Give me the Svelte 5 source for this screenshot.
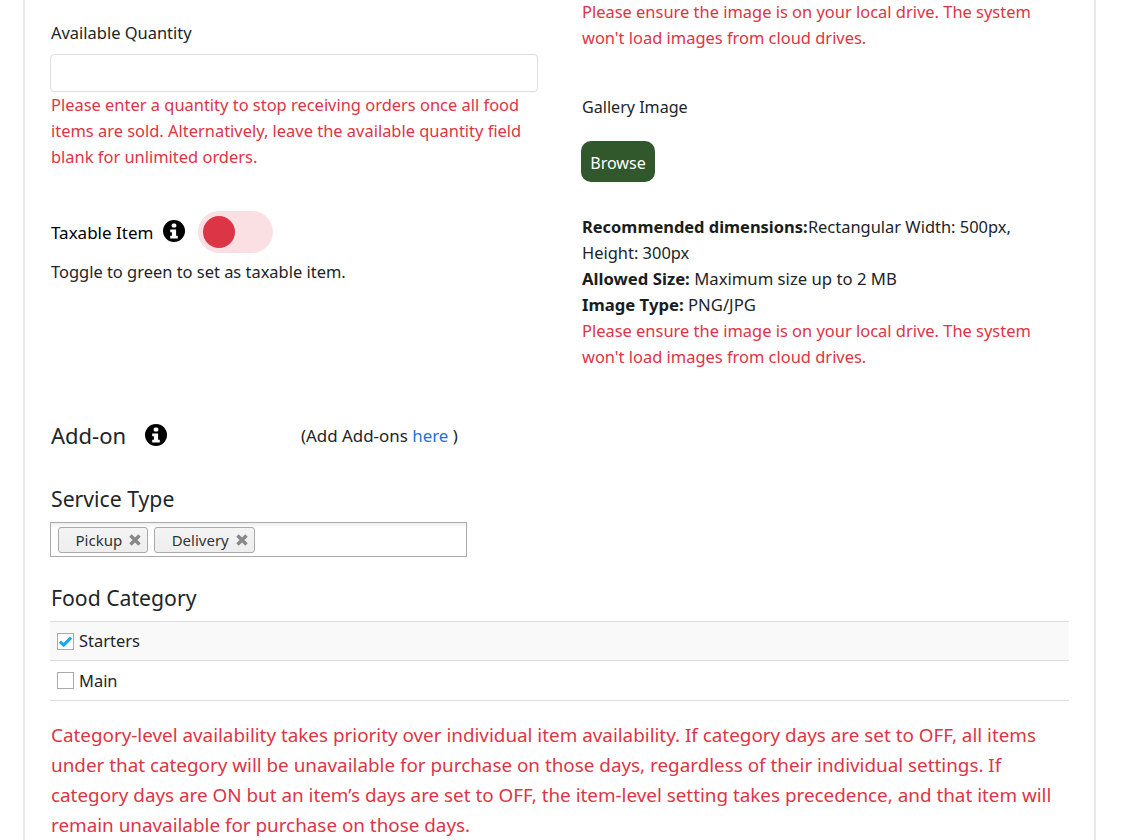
<script>
  const services = ['Pickup', 'Delivery'];
  const categories = [
    { name: 'Starters', checked: true },
    { name: 'Main', checked: false }
  ];
</script>

{#snippet info(cls)}
  <svg class={cls} viewBox="0 0 22 22" aria-hidden="true">
    <circle cx="11" cy="11" r="11" fill="#000" />
    <rect x="8.6" y="3.6" width="4.8" height="4" rx="1.6" fill="#fff" />
    <path d="M7.2 9.4h5.9v6.4h1.7v2.8H7.2v-2.8h1.7v-3.6H7.2z" fill="#fff" />
  </svg>
{/snippet}

<div class="page">
  <div class="card">
    <div class="columns">
      <div class="left">
        <label class="qty-label" for="qty">Available Quantity</label>
        <input id="qty" class="qty" type="text" />
        <p class="red help">Please enter a quantity to stop receiving orders once all food items are sold. Alternatively, leave the available quantity field blank for unlimited orders.</p>
        <div class="taxable">
          <span class="tax-label">Taxable Item</span>
          {@render info('i-tax')}
          <span class="toggle"><span class="knob"></span></span>
        </div>
        <p class="tax-help">Toggle to green to set as taxable item.</p>
      </div>
      <div class="right">
        <p class="red">Please ensure the image is on your local drive. The system won't load images from cloud drives.</p>
        <p class="gallery">Gallery Image</p>
        <button class="browse" type="button">Browse</button>
        <div class="specs">
          <div><b>Recommended dimensions:</b> <span class="rec">Rectangular Width: 500px, Height: 300px</span></div>
          <div class="wide"><b>Allowed Size:</b> Maximum size up to 2 MB</div>
          <div class="wide"><b>Image Type:</b> PNG/JPG</div>
          <div class="red">Please ensure the image is on your local drive. The system won't load images from cloud drives.</div>
        </div>
      </div>
    </div>

    <div class="addon">
      <span class="addon-title">Add-on</span>
      {@render info('i-add')}
      <span class="addon-link">(Add Add-ons <a href="#here">here</a> )</span>
    </div>

    <h3 class="service-title">Service Type</h3>
    <div class="tags">
      {#each services as s}
        <span class="tag">{s}<svg class="x" viewBox="0 0 12 12" aria-hidden="true"><path d="M1.5 1.5l9 9M10.5 1.5l-9 9" stroke="#888" stroke-width="3.4" /></svg></span>
      {/each}
    </div>

    <h3 class="food-title">Food Category</h3>
    <div class="cats">
      {#each categories as c}
        <div class="cat" class:on={c.checked}>
          <span class="box">
            {#if c.checked}
              <svg viewBox="0 0 16 16" aria-hidden="true"><path d="M2 8.2l4 3.6 8-8" fill="none" stroke="#1ba8e6" stroke-width="3.4" /></svg>
            {/if}
          </span>
          <span>{c.name}</span>
        </div>
      {/each}
    </div>

    <p class="red notice">Category-level availability takes priority over individual item availability. If category days are set to OFF, all items under that category will be unavailable for purchase on those days, regardless of their individual settings. If category days are ON but an item’s days are set to OFF, the item-level setting takes precedence, and that item will remain unavailable for purchase on those days.</p>
  </div>
</div>

<style>
  :global(body) {
    margin: 0;
    background: #fff;
    overflow: hidden;
  }
  .page {
    height: 840px;
    overflow: hidden;
    font-family: "Noto Sans", "Open Sans", sans-serif;
    font-size: 16.45px;
    line-height: 26px;
    color: #212529;
  }
  .card {
    box-sizing: border-box;
    width: 1073px;
    margin-left: 23px;
    padding: 0 25px;
    border-left: 2px solid #e9e9e9;
    border-right: 2px solid #e9e9e9;
  }
  p { margin: 0; }
  .red { color: #dc3545; }
  .columns {
    display: grid;
    grid-template-columns: 488px 488px;
    column-gap: 44px;
    height: 415px;
  }
  .left { padding-top: 20px; }
  .qty-label { display: block; height: 34px; padding-left: 1px; }
  .qty {
    display: block;
    box-sizing: border-box;
    width: 488px;
    height: 38px;
    border: 1px solid #ddd;
    border-radius: 4px;
    background: #fff;
  }
  .help { width: 488px; padding-left: 1px; box-sizing: border-box; }
  .taxable {
    display: flex;
    align-items: center;
    margin-top: 41px;
    padding-left: 1px;
    height: 42px;
  }
  .tax-label { color: #000; font-size: 17px; margin-top: 2px; }
  .i-tax { width: 22px; height: 22px; margin: -2px 0 0 10px; }
  .toggle {
    display: block;
    box-sizing: border-box;
    width: 75px;
    height: 42px;
    margin-left: 13px;
    padding: 5px;
    border-radius: 21px;
    background: #fae0e3;
  }
  .knob {
    display: block;
    width: 32px;
    height: 32px;
    border-radius: 50%;
    background: #dc3545;
  }
  .tax-help { margin-top: 6px; padding-left: 1px; }
  .right { margin-top: -1px; }
  .gallery { margin-top: 43px; font-size: 16.1px; }
  .browse {
    display: block;
    margin: 21px 0 0 -1px;
    width: 74px;
    height: 41px;
    padding: 2px 0 0;
    border: 0;
    border-radius: 10px;
    background: #31572c;
    color: #fff;
    font: inherit;
    font-size: 16.1px;
  }
  .specs { margin-top: 32px; }
  .specs b { font-weight: 700; color: #1a1d20; }
  .rec { margin-left: -4px; }
  .wide { font-size: 16.7px; }
  .addon {
    display: flex;
    align-items: center;
    height: 40px;
    padding-left: 1px;
  }
  .addon-title { font-size: 22px; width: 94px; }
  .i-add { width: 22px; height: 22px; }
  .addon-link { margin: 2px 0 0 134px; font-size: 16.9px; }
  a { color: #1976d2; text-decoration: none; }
  .service-title, .food-title {
    margin: 0;
    padding-left: 1px;
    font-size: 21.2px;
    font-weight: 400;
    line-height: 30px;
  }
  .service-title { margin-top: 29px; }
  .tags {
    box-sizing: border-box;
    display: flex;
    gap: 6px;
    width: 417px;
    height: 35px;
    margin-top: 8px;
    padding: 4px 7px;
    border: 1px solid #aaa;
    background: linear-gradient(#eee 0, #fff 5px);
  }
  .tag {
    box-sizing: border-box;
    display: flex;
    align-items: center;
    height: 26px;
    padding: 0 6px 0 16.5px;
    border: 1px solid #aaa;
    border-radius: 3px;
    background: linear-gradient(#f4f4f4, #eee);
    color: #333;
    font-size: 15px;
  }
  .x { width: 12px; height: 12px; margin-left: 7px; }
  .food-title { margin-top: 26px; }
  .cats { margin-top: 8px; border-bottom: 1px solid #ddd; }
  .cat {
    display: flex;
    align-items: center;
    gap: 5px;
    height: 39px;
    padding-left: 7px;
    border-top: 1px solid #ddd;
    font-size: 16.45px;
  }
  .cat.on { height: 38px; background: #f9f9f9; }
  .box {
    box-sizing: border-box;
    width: 17px;
    height: 17px;
    border: 1px solid #aaa;
    background: #fff;
    display: flex;
  }
  .box svg { width: 15px; height: 15px; }
  .notice {
    margin-top: 19px;
    padding-left: 1px;
    font-size: 18.85px;
    line-height: 30px;
  }
</style>
